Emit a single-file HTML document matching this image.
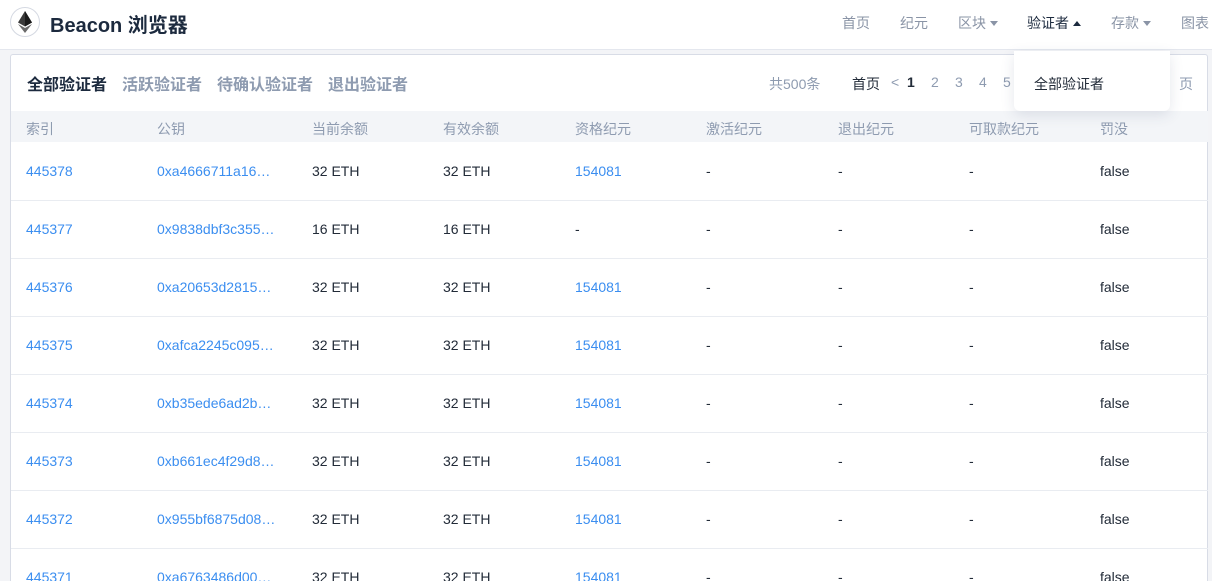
<!DOCTYPE html>
<html><head><meta charset="utf-8"><style>
*{margin:0;padding:0;box-sizing:border-box}
html{width:1212px;height:581px;overflow:hidden}
body{width:1212px;height:581px;overflow:hidden;background:#f3f4f7;font-family:"Liberation Sans","Noto Sans CJK SC",sans-serif;position:relative}
.hdr{position:absolute;left:0;top:0;width:1212px;height:50px;background:#fff;border-bottom:1px solid #e4e7ee}
.logo{position:absolute;left:10px;top:7px;width:30px;height:30px;border-radius:50%;border:1px solid #d5d9e2;background:#fff}
.brand{position:absolute;left:50px;top:9px;font-size:20px;font-weight:bold;color:#1c2a3e}
.nav{position:absolute;top:13px;font-size:14px;color:#8a94a6}
.tri{display:inline-block;width:0;height:0;border-left:4px solid transparent;border-right:4px solid transparent;margin-left:4px;vertical-align:2px}
.dn{border-top:5px solid #8a94a6}.up{border-bottom:5px solid #1c2a3e}
.card{position:absolute;left:10px;top:54px;width:1198px;height:530px;background:#fff;border:1px solid #d8dce6;border-radius:3px}
.tab{position:absolute;top:71px;font-size:16px;font-weight:bold;color:#8e9bb0}
.t{position:absolute;font-size:14px;white-space:nowrap}
.th{position:absolute;left:11px;top:111px;width:1197px;height:31px;background:#f3f5f8}
.line{position:absolute;left:11px;width:1197px;height:1px;background:#e9ecf1}
.blue{color:#3b8ef0}.dark{color:#222b38}.grey{color:#8e9bb0}
.dd{position:absolute;left:1014px;top:51px;width:156px;height:60px;background:#fff;border-radius:0 0 6px 6px;box-shadow:0 4px 14px rgba(40,60,100,.12)}
</style></head><body>
<div class="hdr">
<div class="logo"><svg width="30" height="30" viewBox="0 0 30 30" style="position:absolute;left:-1px;top:-1px"><polygon points="15,4 8,15.5 15,19.5 22,15.5" fill="#3a3a3a"/><polygon points="15,4 15,19.5 22,15.5" fill="#1a1a1a"/><polygon points="8,17 15,26 22,17 15,21" fill="#6a6a6a"/></svg></div>
<div class="brand">Beacon 浏览器</div>
<div class="nav" style="left:842px">首页</div>
<div class="nav" style="left:900px">纪元</div>
<div class="nav" style="left:958px">区块<span class="tri dn"></span></div>
<div class="nav" style="left:1027px;color:#1c2a3e">验证者<span class="tri up"></span></div>
<div class="nav" style="left:1111px">存款<span class="tri dn"></span></div>
<div class="nav" style="left:1181px">图表</div>
</div>
<div class="card"></div>
<div class="tab" style="left:27px;color:#1c2a3e">全部验证者</div>
<div class="tab" style="left:122px">活跃验证者</div>
<div class="tab" style="left:217px">待确认验证者</div>
<div class="tab" style="left:328px">退出验证者</div>
<div class="t grey" style="left:769px;top:74px">共500条</div>
<div class="t dark" style="left:852px;top:74px">首页</div>
<div class="t grey" style="left:891px;top:74px">&lt;</div>
<div class="t dark" style="left:907px;top:74px;font-weight:bold">1</div>
<div class="t grey" style="left:931px;top:74px">2</div>
<div class="t grey" style="left:955px;top:74px">3</div>
<div class="t grey" style="left:979px;top:74px">4</div>
<div class="t grey" style="left:1003px;top:74px">5</div>
<div class="t grey" style="left:1179px;top:74px">页</div>
<div class="th"></div>
<div class="t grey" style="left:26px;top:119px">索引</div>
<div class="t grey" style="left:157px;top:119px">公钥</div>
<div class="t grey" style="left:312px;top:119px">当前余额</div>
<div class="t grey" style="left:443px;top:119px">有效余额</div>
<div class="t grey" style="left:575px;top:119px">资格纪元</div>
<div class="t grey" style="left:706px;top:119px">激活纪元</div>
<div class="t grey" style="left:838px;top:119px">退出纪元</div>
<div class="t grey" style="left:969px;top:119px">可取款纪元</div>
<div class="t grey" style="left:1100px;top:119px">罚没</div>
<div id="rows"></div>
<script>
var d=[["445378","0xa4666711a16…","32","154081"],["445377","0x9838dbf3c355…","16","-"],["445376","0xa20653d2815…","32","154081"],["445375","0xafca2245c095…","32","154081"],["445374","0xb35ede6ad2b…","32","154081"],["445373","0xb661ec4f29d8…","32","154081"],["445372","0x955bf6875d08…","32","154081"],["445371","0xa6763486d00…","32","154081"]];
var h="";d.forEach(function(r,i){var y=163+58*i;
h+='<div class="t blue" style="left:26px;top:'+y+'px">'+r[0]+'</div><div class="t blue" style="left:157px;top:'+y+'px">'+r[1]+'</div><div class="t dark" style="left:312px;top:'+y+'px">'+r[2]+' ETH</div><div class="t dark" style="left:443px;top:'+y+'px">'+r[2]+' ETH</div><div class="t '+(r[3]=="-"?"dark":"blue")+'" style="left:575px;top:'+y+'px">'+r[3]+'</div><div class="t dark" style="left:706px;top:'+y+'px">-</div><div class="t dark" style="left:838px;top:'+y+'px">-</div><div class="t dark" style="left:969px;top:'+y+'px">-</div><div class="t dark" style="left:1100px;top:'+y+'px">false</div>';
if(i<7)h+='<div class="line" style="top:'+(200+58*i)+'px"></div>';});
document.getElementById("rows").innerHTML=h;
</script>
<div class="dd"><div class="t dark" style="left:20px;top:23px">全部验证者</div></div>
</body></html>
